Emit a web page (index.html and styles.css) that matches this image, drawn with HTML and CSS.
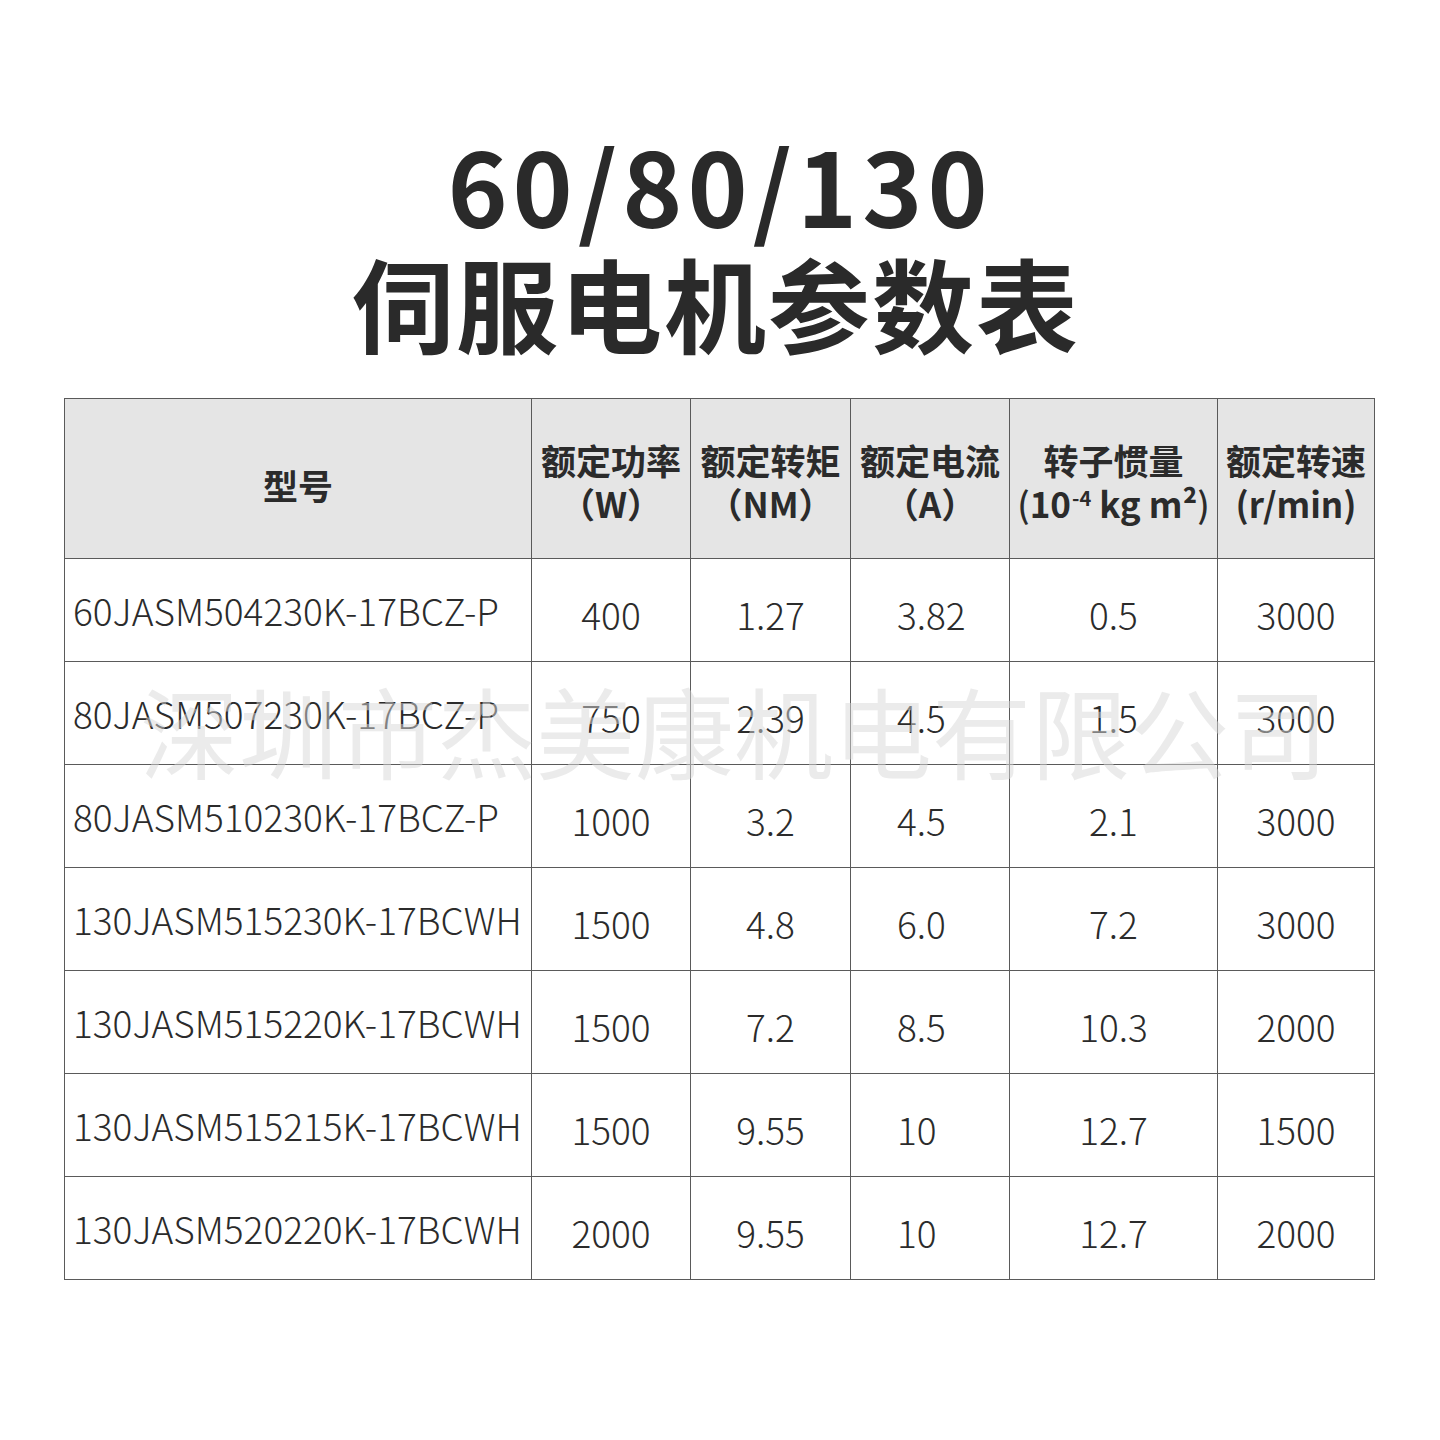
FILE: index.html
```html
<!DOCTYPE html>
<html lang="zh-CN">
<head>
<meta charset="utf-8">
<title>60/80/130 伺服电机参数表</title>
<link rel="stylesheet" href="styles.css">
</head>
<body>
<div class="page">
  <header class="title">
    <div class="title-num">60/80/130</div>
    <div class="title-cn">伺服电机参数表</div>
  </header>
  <div class="table-wrap">
    <table class="spec">
      <colgroup>
        <col class="c-model"><col class="c-power"><col class="c-torque"><col class="c-current"><col class="c-inertia"><col class="c-speed">
      </colgroup>
      <thead>
        <tr>
          <th class="h-model">型号</th>
          <th>额定功率<br>（W）</th>
          <th>额定转矩<br>（NM）</th>
          <th>额定电流<br>（A）</th>
          <th>转子惯量<br><span class="paren">(</span>10<sup>-4</sup> kg m²<span class="paren">)</span></th>
          <th>额定转速<br>(r/min)</th>
        </tr>
      </thead>
      <tbody>
        <tr><td class="model">60JASM504230K-17BCZ-P</td><td>400</td><td>1.27</td><td class="cur">3.82</td><td>0.5</td><td>3000</td></tr>
        <tr><td class="model">80JASM507230K-17BCZ-P</td><td>750</td><td>2.39</td><td class="cur">4.5</td><td>1.5</td><td>3000</td></tr>
        <tr><td class="model">80JASM510230K-17BCZ-P</td><td>1000</td><td>3.2</td><td class="cur">4.5</td><td>2.1</td><td>3000</td></tr>
        <tr><td class="model">130JASM515230K-17BCWH</td><td>1500</td><td>4.8</td><td class="cur">6.0</td><td>7.2</td><td>3000</td></tr>
        <tr><td class="model">130JASM515220K-17BCWH</td><td>1500</td><td>7.2</td><td class="cur">8.5</td><td>10.3</td><td>2000</td></tr>
        <tr><td class="model">130JASM515215K-17BCWH</td><td>1500</td><td>9.55</td><td class="cur">10</td><td>12.7</td><td>1500</td></tr>
        <tr><td class="model">130JASM520220K-17BCWH</td><td>2000</td><td>9.55</td><td class="cur">10</td><td>12.7</td><td>2000</td></tr>
      </tbody>
    </table>
    <div class="watermark">深圳市杰美康机电有限公司</div>
  </div>
</div>
</body>
</html>
```
FILE: styles.css
```css
html, body {
  margin: 0;
  padding: 0;
  background: #ffffff;
}
body {
  font-family: "Noto Sans CJK SC", "Noto Sans", sans-serif;
  color: #2b2b2b;
}
.page {
  width: 1440px;
  height: 1440px;
  box-sizing: border-box;
  padding-top: 124px;
}
.title {
  text-align: center;
  font-weight: 700;
  color: #2a2a2a;
  padding-right: 8px;
}
.title-num {
  font-size: 102px;
  line-height: 120px;
  letter-spacing: 5px;
  padding-left: 8px;
}
.title-cn {
  font-size: 102px;
  line-height: 120px;
  letter-spacing: 2px;
  margin-top: -2px;
}
.table-wrap {
  position: relative;
  width: 1310px;
  margin: 36px 0 0 64px;
}
.spec {
  width: 1310px;
  border-collapse: collapse;
  table-layout: fixed;
}
.c-model { width: 467px; }
.c-power { width: 159px; }
.c-torque { width: 160px; }
.c-current { width: 159px; }
.c-inertia { width: 208px; }
.c-speed { width: 157px; }
.spec th,
.spec td {
  border: 1.5px solid #5a5a5a;
  padding: 0;
  text-align: center;
  vertical-align: middle;
}
.spec thead tr {
  height: 160px;
}
.spec th {
  background: #e5e5e5;
  font-size: 35px;
  line-height: 43px;
  font-weight: 700;
  color: #2b2b2b;
  white-space: nowrap;
  padding-top: 4px;
}
.spec th.h-model {
  padding-top: 12px;
}
.spec th .paren {
  font-weight: 500;
}
.spec sup {
  font-size: 20px;
  line-height: 0;
  vertical-align: 12px;
  margin-left: 1px;
}
.spec tbody tr {
  height: 103px;
}
.spec td {
  font-size: 37px;
  font-weight: 300;
  color: #2b2b2b;
  padding-top: 8px;
}
.spec td.model {
  text-align: left;
  padding-left: 8px;
  padding-top: 0;
}
.spec td.cur {
  text-align: left;
  padding-left: 46px;
}
.watermark {
  position: absolute;
  left: 76px;
  top: 270px;
  font-size: 99px;
  line-height: 122px;
  font-weight: 400;
  color: rgba(215, 215, 215, 0.5);
  white-space: nowrap;
  pointer-events: none;
}
```
